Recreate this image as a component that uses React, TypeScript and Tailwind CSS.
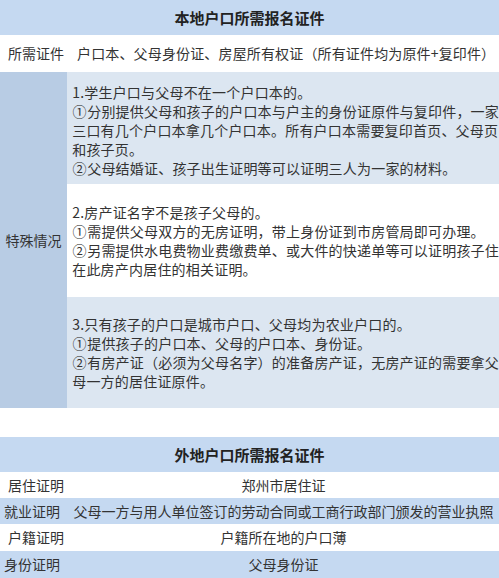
const font = "font-['Microsoft_YaHei','Noto_Sans_CJK_SC',sans-serif]";

const bottomRows = [
  { label: "居住证明", value: "郑州市居住证", bg: "bg-white", h: "h-[26px]", pl: "pl-[8px]" },
  {
    label: "就业证明",
    value: "父母一方与用人单位签订的劳动合同或工商行政部门颁发的营业执照",
    bg: "bg-[#c5d9f1]",
    h: "h-[26px]",
    pl: "pl-[4px]",
  },
  { label: "户籍证明", value: "户籍所在地的户口薄", bg: "bg-white", h: "h-[27px]", pl: "pl-[8px]" },
  { label: "身份证明", value: "父母身份证", bg: "bg-[#c5d9f1]", h: "h-[27px]", pl: "pl-[4px]" },
];

// circled numbers are full width in the original font
const Num = ({ n }: { n: string }) => (
  <span className="inline-block w-[15px] text-center">{n}</span>
);

export default function App() {
  return (
    <div className={`w-[499px] h-[578px] overflow-hidden bg-white text-[14px] leading-[19px] text-[#333] ${font}`}>
      {/* 本地户口 */}
      <div className="h-[35px] bg-[#c5d9f1] flex items-center justify-center text-[15px] font-bold text-[#222]">
        本地户口所需报名证件
      </div>
      <div className="h-[37px] flex items-center whitespace-nowrap">
        <div className="w-[68px] pl-[8px]">所需证件</div>
        <div className="pl-[9px] tracking-[0.15px]">户口本、父母身份证、房屋所有权证（所有证件均为原件+复印件）</div>
      </div>

      <div className="flex">
        <div className="w-[68px] bg-[#b8cce4] flex items-center justify-center">特殊情况</div>
        <div className="flex-1 flex flex-col whitespace-nowrap tracking-[0.2px]">
          <div className="h-[112px] bg-[#dce6f1] flex items-center pl-[5px] pt-[4px]">
            <p>
              1.学生户口与父母不在一个户口本的。
              <br />
              <Num n="①" />分别提供父母和孩子的户口本与户主的身份证原件与复印件，一家
              <br />
              三口有几个户口本拿几个户口本。所有户口本需要复印首页、父母页
              <br />
              和孩子页。
              <br />
              <Num n="②" />父母结婚证、孩子出生证明等可以证明三人为一家的材料。
            </p>
          </div>
          <div className="h-[113px] bg-white flex items-center pl-[5px]">
            <p>
              2.房产证名字不是孩子父母的。
              <br />
              <Num n="①" />需提供父母双方的无房证明，带上身份证到市房管局即可办理。
              <br />
              <Num n="②" />另需提供水电费物业费缴费单、或大件的快递单等可以证明孩子住
              <br />
              在此房产内居住的相关证明。
            </p>
          </div>
          <div className="h-[111px] bg-[#dce6f1] flex items-center pl-[5px]">
            <p>
              3.只有孩子的户口是城市户口、父母均为农业户口的。
              <br />
              <Num n="①" />提供孩子的户口本、父母的户口本、身份证。
              <br />
              <Num n="②" />有房产证（必须为父母名字）的准备房产证，无房产证的需要拿父
              <br />
              母一方的居住证原件。
            </p>
          </div>
        </div>
      </div>

      <div className="h-[29px] bg-white" />

      {/* 外地户口 */}
      <div className="h-[35px] bg-[#c5d9f1] flex items-center justify-center text-[15px] font-bold text-[#222]">
        外地户口所需报名证件
      </div>
      {bottomRows.map((r) => (
        <div key={r.label} className={`${r.h} ${r.bg} flex items-center whitespace-nowrap`}>
          <div className={`w-[68px] shrink-0 ${r.pl}`}>{r.label}</div>
          <div className="flex-1 text-center">{r.value}</div>
        </div>
      ))}
    </div>
  );
}
